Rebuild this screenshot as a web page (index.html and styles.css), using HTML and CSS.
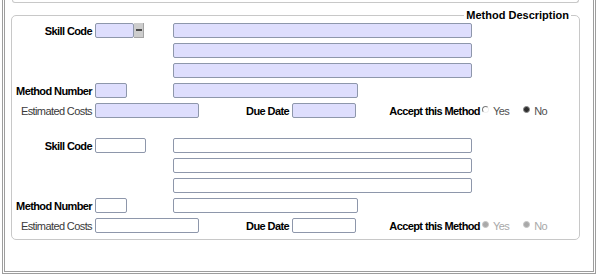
FILE: index.html
```html
<!DOCTYPE html>
<html lang="en">
<head>
  <meta charset="UTF-8">
  <title>Method Description</title>
  <link rel="stylesheet" href="styles.css">
</head>
<body>
  <div class="frame">
    <div class="top-box"></div>
    <fieldset class="methods">
      <legend>Method Description</legend>

      <!-- first method (editable) -->
      <div class="group">
        <div class="row">
          <label class="lbl">Skill Code</label>
          <div class="cell">
            <input class="field filled w-code" type="text">
            <span class="lookup"></span>
          </div>
          <input class="field filled w-long" type="text">
        </div>
        <div class="row indent">
          <input class="field filled w-long" type="text">
        </div>
        <div class="row indent">
          <input class="field filled w-long" type="text">
        </div>
        <div class="row">
          <label class="lbl">Method Number</label>
          <div class="cell">
            <input class="field filled w-num" type="text">
          </div>
          <input class="field filled w-mid" type="text">
        </div>
        <div class="row">
          <label class="lbl plain">Estimated Costs</label>
          <input class="field filled w-cost" type="text">
          <label class="lbl due">Due Date</label>
          <input class="field filled w-date" type="text">
          <label class="lbl accept">Accept this Method</label>
          <span class="radio"></span><span class="opt">Yes</span>
          <span class="radio on"></span><span class="opt">No</span>
        </div>
      </div>

      <!-- second method (blank) -->
      <div class="group">
        <div class="row">
          <label class="lbl">Skill Code</label>
          <div class="cell">
            <input class="field w-code2" type="text">
          </div>
          <input class="field w-long" type="text">
        </div>
        <div class="row indent">
          <input class="field w-long" type="text">
        </div>
        <div class="row indent">
          <input class="field w-long" type="text">
        </div>
        <div class="row">
          <label class="lbl">Method Number</label>
          <div class="cell">
            <input class="field w-num" type="text">
          </div>
          <input class="field w-mid" type="text">
        </div>
        <div class="row">
          <label class="lbl plain">Estimated Costs</label>
          <input class="field w-cost" type="text">
          <label class="lbl due">Due Date</label>
          <input class="field w-date" type="text">
          <label class="lbl accept">Accept this Method</label>
          <span class="radio off"></span><span class="opt off">Yes</span>
          <span class="radio off"></span><span class="opt off">No</span>
        </div>
      </div>
    </fieldset>
  </div>
</body>
</html>
```

FILE: styles.css
```css
:root {
  --frame: #9d9d9d;
  --line: #c8c8c8;
  --field-border: #8e97ab;
  --field-fill: #dedefd;
}
html, body {
  margin: 0;
  padding: 0;
  background: #fff;
  font-family: 'Liberation Sans', Arial, sans-serif;
  color: #000;
}

/* outer panel */
.frame {
  box-sizing: border-box;
  height: 274px;
  margin: 0 4px 0 2px;
  border: 3px double var(--frame);
  border-top: none;
  overflow: hidden;
}
.top-box {
  box-sizing: border-box;
  height: 3px;
  margin: 0 14px 0 7px;
  border: 1px solid var(--line);
  border-top: none;
  border-radius: 0 0 4px 4px;
}

/* fieldset */
.methods {
  margin: 6px 13px 0 6px;
  padding: 0 0 6px 0;
  border: 1px solid var(--line);
  border-radius: 5px;
  min-width: 0;
}
.methods legend {
  margin-left: auto;
  margin-right: 8px;
  padding: 0 2px;
  font-size: 11px;
  line-height: 13px;
  font-weight: bold;
}

.group {
  display: flex;
  flex-direction: column;
  gap: 5px;
}
.group:first-of-type {
  padding-top: 1px;
}
.group + .group {
  margin-top: 20px;
}
.row {
  display: flex;
  align-items: center;
  height: 15px;
}
.row.indent {
  padding-left: 161px;
}

/* labels */
.lbl {
  box-sizing: border-box;
  width: 80px;
  margin-right: 3px;
  padding-top: 2px;
  text-align: right;
  font-size: 11px;
  line-height: 15px;
  font-weight: bold;
  letter-spacing: -0.6px;
  white-space: nowrap;
}
.lbl.plain {
  font-weight: normal;
  color: #3a3a3a;
  letter-spacing: -0.6px;
}
.lbl.due {
  width: 90px;
}
.lbl.accept {
  width: 124px;
  margin-right: 2px;
}
.cell {
  display: flex;
  width: 78px;
  height: 15px;
}

/* inputs */
.field {
  box-sizing: border-box;
  height: 15px;
  margin: 0;
  padding: 0 2px;
  border: 1px solid var(--field-border);
  border-radius: 2px;
  background: #fff;
  font: 11px 'Liberation Sans', Arial, sans-serif;
  outline: none;
}
.field.filled {
  background: var(--field-fill);
}
.w-code { width: 39px; }
.w-code2 { width: 51px; }
.w-num { width: 32px; }
.w-long { width: 299px; }
.w-mid { width: 185px; }
.w-cost { width: 104px; }
.w-date { width: 64px; }

.lookup {
  position: relative;
  box-sizing: border-box;
  width: 10px;
  height: 15px;
  background: #cdcdcd;
  border-right: 1px solid #a4a4a4;
  border-bottom: 1px solid #a4a4a4;
}
.lookup::after {
  content: "";
  position: absolute;
  left: 2px;
  top: 6px;
  width: 6px;
  height: 2px;
  background: #4a4a4a;
}

/* radio buttons */
.radio {
  box-sizing: border-box;
  width: 7px;
  height: 7px;
  margin-top: -3px;
  border-radius: 50%;
  border: 1px solid;
  border-color: #7c7c7c #f0f0f0 #f0f0f0 #7c7c7c;
}
.radio.on {
  margin-left: 14px;
  border-color: #8a8a8a;
  background: #2e2e2e;
}
.radio.off {
  border-color: #c6c6c6;
  background: #a9a9a9;
}
.radio.off + .opt + .radio.off {
  margin-left: 14px;
}
.opt {
  margin-left: 4px;
  padding-top: 2px;
  font-size: 11px;
  line-height: 15px;
  letter-spacing: -0.6px;
  color: #505050;
}
.opt.off {
  color: #a8a8a8;
}
```
